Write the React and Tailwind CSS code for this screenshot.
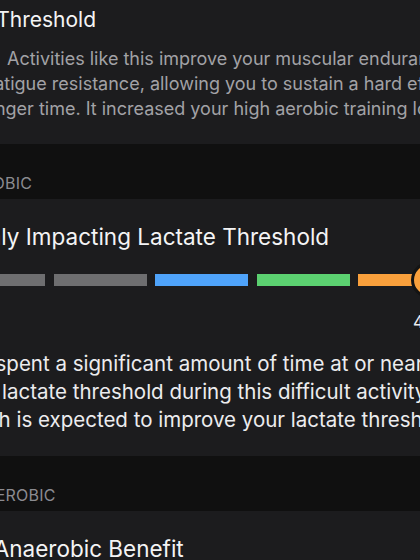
const segments = [
  'bg-[#6e6e70]',
  'bg-[#6e6e70]',
  'bg-[#4fa3fa]',
  'bg-[#5bd070]',
  'bg-[#f9a03c]',
]

function SectionHeader({ label }) {
  return (
    <div className="bg-[#101010] pt-[29px] pb-[6px]">
      <div className="-ml-[39px] whitespace-nowrap text-[16px] leading-5 tracking-[0.2px] text-[#8b8b90]">{label}</div>
    </div>
  )
}

export default function App() {
  return (
    <div className="h-[560px] w-[420px] overflow-hidden bg-[#101010] font-['Inter','Noto_Sans',sans-serif] antialiased">
      <section className="bg-[#1c1c1e] pt-[6px] pb-[23px]">
        <h2 className="-ml-[83px] whitespace-nowrap text-[21px] leading-7 text-[#f4f4f5]">Lactate Threshold</h2>
        <div className="-ml-[49px] mt-[12px] text-[18px] leading-[25px] text-[#a2a2a6]">
          <p className="ml-[56px] whitespace-nowrap">Activities like this improve your muscular endurance</p>
          <p className="whitespace-nowrap">and fatigue resistance, allowing you to sustain a hard effort</p>
          <p className="whitespace-nowrap">for longer time. It increased your high aerobic training load.</p>
        </div>
      </section>

      <SectionHeader label="AEROBIC" />

      <section className="bg-[#1c1c1e] pt-6 pb-[22px]">
        <h2 className="-ml-[48px] whitespace-nowrap text-[22.5px] leading-7 text-[#f4f4f5]">Highly Impacting Lactate Threshold</h2>
        <div className="relative mt-[23px] -ml-[48px] flex gap-[8.5px]">
          {segments.map((color, i) => (
            <div key={i} className={`h-3 w-[93px] shrink-0 ${color}`} />
          ))}
          <div className="absolute left-[459px] -top-[12px] size-9 rounded-full border-[3px] border-[#141414] bg-[#f9a03c]" />
        </div>
        <div className="mt-[26px] ml-[413px] whitespace-nowrap text-[17px] leading-5 text-[#ececee]">4.7</div>
        <div className="-ml-[47px] mt-[18px] text-[20.5px] leading-[28px] text-[#ececee]">
          <p className="whitespace-nowrap">You spent a significant amount of time at or near your</p>
          <p className="whitespace-nowrap">your lactate threshold during this difficult activity,</p>
          <p className="whitespace-nowrap">which is expected to improve your lactate threshold.</p>
        </div>
      </section>

      <SectionHeader label="ANAEROBIC" />

      <section className="bg-[#1c1c1e] pt-6 pb-[23px]">
        <h2 className="-ml-[43px] whitespace-nowrap text-[22.5px] leading-7 text-[#f4f4f5]">No Anaerobic Benefit</h2>
      </section>
    </div>
  )
}
